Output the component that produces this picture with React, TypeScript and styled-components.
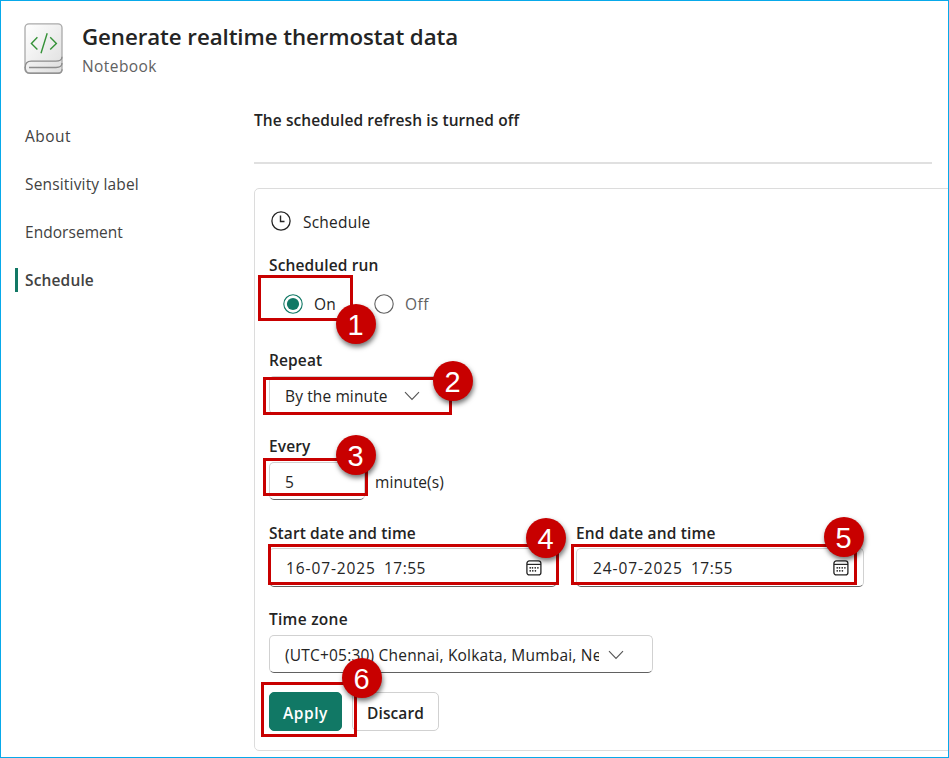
import React, { useState } from 'react';
import styled, { createGlobalStyle, css } from 'styled-components';

const GlobalStyle = createGlobalStyle`
  * { box-sizing: border-box; }
  body { margin: 0; background: #fff; }
`;

const sans = `'Open Sans', 'Noto Sans', sans-serif`;

const Frame = styled.div`
  position: relative;
  width: 949px;
  height: 758px;
  overflow: hidden;
  border: 1px solid #08a9ea;
  background: #fff;
  color: #242424;
  font: 400 15.5px/20px ${sans};
  white-space: nowrap;
`;

const Header = styled.header`
  display: flex;
  gap: 18px;
  height: 100px;
  padding: 21px 0 0 23px;
`;

const Heading = styled.div`
  display: flex;
  flex-direction: column;
  padding-top: 1px;
`;

const Title = styled.h1`
  margin: 0;
  font: 600 22.3px/28px ${sans};
  letter-spacing: -0.08px;
`;

const Subtitle = styled.span`
  margin-top: 5px;
  color: #616161;
  letter-spacing: 0.43px;
`;

const Body = styled.div`
  display: grid;
  grid-template-columns: 253px 1fr;
`;

const Nav = styled.nav`
  display: flex;
  flex-direction: column;
  gap: 24px;
  padding: 23px 0 0 14px;
`;

const NavItem = styled.a<{ $active?: boolean; $track: number }>`
  display: flex;
  align-items: center;
  height: 24px;
  padding-left: ${p => (p.$active ? 7 : 10)}px;
  color: #424242;
  letter-spacing: ${p => p.$track}px;
  ${p => p.$active && css`
    border-left: 3px solid #117865;
    font-weight: 600;
  `}
`;

const Main = styled.main`
  display: flex;
  flex-direction: column;
`;

const Status = styled.div`
  width: 678px;
  height: 63px;
  padding-top: 9px;
  border-bottom: 2px solid #e0e0e0;
  font-weight: 600;
  letter-spacing: 0.09px;
`;

const Panel = styled.section`
  width: 720px;
  height: 563px;
  margin-top: 24px;
  padding: 23px 14px 0;
  border: 1px solid #dcdcdc;
  border-radius: 5px;
`;

const PanelTitle = styled.div`
  display: flex;
  align-items: center;
  gap: 11px;
  height: 20px;
  padding-left: 1px;
  margin-bottom: 23px;
  letter-spacing: 0.21px;
`;

const Field = styled.div<{ $after?: number; $gap?: number }>`
  display: flex;
  flex-direction: column;
  align-items: flex-start;
  gap: ${p => p.$gap ?? 6}px;
  margin-bottom: ${p => p.$after ?? 22}px;
`;

const Label = styled.label<{ $track?: number }>`
  font-weight: 600;
  letter-spacing: ${p => p.$track ?? 0.13}px;
`;

const Options = styled.div`
  display: flex;
  gap: 38px;
  padding-left: 14px;
`;

const Option = styled.div<{ $on: boolean }>`
  display: flex;
  align-items: center;
  gap: 11px;
  color: ${p => (p.$on ? '#242424' : '#616161')};
  letter-spacing: ${p => (p.$on ? 0.2 : 0.5)}px;
`;

const Control = styled.div<{ $width: number }>`
  display: flex;
  align-items: center;
  width: ${p => p.$width}px;
  height: 38px;
  padding: 2px 15px 0;
  border: 1px solid #d1d1d1;
  border-bottom-color: #616161;
  border-radius: 5px;
`;

const Value = styled.span<{ $width?: number; $track?: number }>`
  flex: none;
  width: ${p => (p.$width ? `${p.$width}px` : 'auto')};
  overflow: hidden;
  letter-spacing: ${p => p.$track ?? 0.12}px;
`;

const InputLine = styled.div`
  display: flex;
  align-items: center;
  gap: 10px;
`;

const Unit = styled.span`
  padding-top: 2px;
  letter-spacing: 0.1px;
`;

const DateRow = styled.div`
  display: flex;
  gap: 19px;
`;

const DateControl = styled(Control)`
  height: 39px;
  padding-top: 1px;
  padding-right: 14px;
  padding-left: 16px;
`;

const Actions = styled.div`
  display: flex;
  gap: 10px;
`;

const Button = styled.button<{ $primary?: boolean }>`
  width: ${p => (p.$primary ? 73 : 87)}px;
  height: 39px;
  padding: 3px 0 0;
  border: 1px solid ${p => (p.$primary ? '#117865' : '#d1d1d1')};
  border-radius: 5px;
  background: ${p => (p.$primary ? '#117865' : '#fff')};
  color: ${p => (p.$primary ? '#fff' : '#242424')};
  font: 600 15.5px/20px ${sans};
  letter-spacing: ${p => (p.$primary ? 0.56 : 0.1)}px;
`;

/* Step markers float over the form. */
const Outline = styled.div<{ $x: number; $y: number; $w: number; $h: number }>`
  position: absolute;
  left: ${p => p.$x - 1}px;
  top: ${p => p.$y - 1}px;
  width: ${p => p.$w}px;
  height: ${p => p.$h}px;
  border: 3px solid #c80000;
`;

const Badge = styled.div<{ $x: number; $y: number }>`
  position: absolute;
  left: ${p => p.$x - 21}px;
  top: ${p => p.$y - 21}px;
  width: 40px;
  height: 40px;
  padding-right: 1px;
  border-radius: 50%;
  background: #c80000;
  box-shadow: 1px 3px 5px rgba(0, 0, 0, 0.55);
  color: #fff;
  font: 29px/43px 'Liberation Sans', Arial, sans-serif;
  text-align: center;
`;

const Icon = styled.svg`
  display: block;
  flex: none;
  fill: none;
`;

const NotebookIcon = () => (
  <Icon width="40" height="53" viewBox="0 0 40 53">
    <defs>
      <linearGradient id="cover" x1="0" y1="0" x2="1" y2="1">
        <stop offset="0" stopColor="#fff" />
        <stop offset="1" stopColor="#dedede" />
      </linearGradient>
    </defs>
    <rect x="1" y="1.8" width="37" height="49.4" rx="4" fill="url(#cover)" stroke="#aaa" strokeWidth="1.3" />
    <path d="M1.2 45.5c0-4.5 2.5-6.3 6-6.3h24.5c4 0 6.3-1.4 6.3-4.5M5 45.5h27c3.5 0 6-1.3 6-4.5" stroke="#8c8c8c" strokeWidth="1.3" />
    <path d="M1.1 45c0 4 2 6.2 5 6.2h28c2.5 0 4-1.6 4-4" stroke="#929292" strokeWidth="1.4" />
    <path d="M13.4 15.2 7.4 21.4l6 6M26.2 15.2l6.2 6.2-6.2 6M23.2 11.2l-6.2 20" stroke="#359238" strokeWidth="1.4" />
  </Icon>
);

const ClockIcon = () => (
  <Icon width="22" height="22" viewBox="0 0 22 22" stroke="#242424">
    <circle cx="11" cy="10" r="9.1" strokeWidth="1.3" />
    <path d="M10.5 4.5v6h4" strokeWidth="1.4" />
  </Icon>
);

const RadioIcon = ({ on }: { on: boolean }) => (
  <Icon width="20" height="20" viewBox="0 0 20 20">
    <circle cx="10" cy="10" r="9.2" stroke={on ? '#117865' : '#616161'} strokeWidth="1.1" />
    {on && <circle cx="10" cy="10" r="6.1" fill="#117865" />}
  </Icon>
);

const ChevronShape = styled(Icon)<{ $gap: number }>`
  margin: -1px 0 0 ${p => p.$gap}px;
`;

const Chevron = ({ gap }: { gap: number }) => (
  <ChevronShape $gap={gap} width="16" height="10" viewBox="0 0 16 10">
    <path d="m1 1.2 7 7.2 7-7.2" stroke="#555" strokeWidth="1.1" />
  </ChevronShape>
);

const CalendarShape = styled(Icon)`
  margin-left: auto;
`;

const CalendarIcon = () => (
  <CalendarShape width="16" height="16" viewBox="0 0 16 16">
    <rect x="0.9" y="0.9" width="14" height="14" rx="2.5" stroke="#242424" strokeWidth="1.3" />
    <path d="M1 4.4h14" stroke="#242424" strokeWidth="1.2" />
    <path d="M6.5 7.8h.01M9.2 7.8h.01M11.9 7.8h.01M4.2 7.8h.01M4.2 10.8h.01M6.8 10.8h.01M9.4 10.8h.01" stroke="#242424" strokeWidth="1.7" strokeLinecap="round" />
  </CalendarShape>
);

const steps = [
  { box: [258, 275, 95, 46], at: [356, 324] },
  { box: [263, 377, 189, 38], at: [453, 381] },
  { box: [263, 458, 105, 38], at: [356, 455] },
  { box: [268, 544, 291, 41], at: [546, 538] },
  { box: [571, 544, 286, 41], at: [844, 537] },
  { box: [261, 682, 96, 55], at: [362, 678] },
];

export default function App() {
  const [enabled, setEnabled] = useState(true);
  return (
    <Frame>
      <GlobalStyle />
      <Header>
        <NotebookIcon />
        <Heading>
          <Title>Generate realtime thermostat data</Title>
          <Subtitle>Notebook</Subtitle>
        </Heading>
      </Header>
      <Body>
        <Nav>
          <NavItem $track={0.46}>About</NavItem>
          <NavItem $track={0.17}>Sensitivity label</NavItem>
          <NavItem $track={0.04}>Endorsement</NavItem>
          <NavItem $active $track={0.15}>Schedule</NavItem>
        </Nav>
        <Main>
          <Status>The scheduled refresh is turned off</Status>
          <Panel>
            <PanelTitle><ClockIcon />Schedule</PanelTitle>
            <Field $gap={19} $after={36}>
              <Label>Scheduled run</Label>
              <Options>
                <Option $on={enabled} onClick={() => setEnabled(true)}><RadioIcon on={enabled} />On</Option>
                <Option $on={!enabled} onClick={() => setEnabled(false)}><RadioIcon on={!enabled} />Off</Option>
              </Options>
            </Field>
            <Field>
              <Label>Repeat</Label>
              <Control $width={182}><Value>By the minute</Value><Chevron gap={16} /></Control>
            </Field>
            <Field $after={23}>
              <Label>Every</Label>
              <InputLine>
                <Control $width={96}><Value>5</Value></Control>
                <Unit>minute(s)</Unit>
              </InputLine>
            </Field>
            <DateRow>
              <Field $gap={5}>
                <Label $track={0.1}>Start date and time</Label>
                <DateControl $width={288}>
                  <Value $width={98} $track={0.9}>16-07-2025</Value>
                  <Value $track={0.49}>17:55</Value>
                  <CalendarIcon />
                </DateControl>
              </Field>
              <Field $gap={5}>
                <Label $track={0.18}>End date and time</Label>
                <DateControl $width={288}>
                  <Value $width={98} $track={0.9}>24-07-2025</Value>
                  <Value $track={0.49}>17:55</Value>
                  <CalendarIcon />
                </DateControl>
              </Field>
            </DateRow>
            <Field $after={19}>
              <Label $track={0.27}>Time zone</Label>
              <Control $width={384}>
                <Value $width={314} $track={0.2}>(UTC+05:30) Chennai, Kolkata, Mumbai, New Delhi</Value>
                <Chevron gap={9} />
              </Control>
            </Field>
            <Actions>
              <Button $primary>Apply</Button>
              <Button>Discard</Button>
            </Actions>
          </Panel>
        </Main>
      </Body>
      {steps.map(({ box, at }, i) => (
        <React.Fragment key={i}>
          <Outline $x={box[0]} $y={box[1]} $w={box[2]} $h={box[3]} />
          <Badge $x={at[0]} $y={at[1]}>{i + 1}</Badge>
        </React.Fragment>
      ))}
    </Frame>
  );
}
